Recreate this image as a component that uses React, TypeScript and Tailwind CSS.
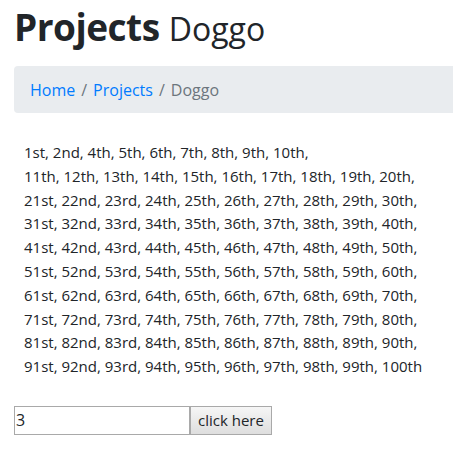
const ordinal = (n: number) => {
  const r = n % 100
  if (r >= 11 && r <= 13) return `${n}th`
  if (n % 10 === 1) return `${n}st`
  if (n % 10 === 2) return `${n}nd`
  if (n % 10 === 3) return `${n}rd`
  return `${n}th`
}

const rows = Array.from({ length: 10 }, (_, i) =>
  Array.from({ length: 10 }, (_, j) => i * 10 + j + 1).filter((n) => n !== 3)
)

export default function App() {
  return (
    <div className="bg-white text-[#212529] font-['Open_Sans',sans-serif] min-h-screen overflow-hidden">
      <h1 className="pl-[14px] pt-[3px] text-[37px] leading-[48px] font-bold tracking-[-0.5px]">
        Projects <small className="text-[32px] font-normal tracking-normal">Doggo</small>
      </h1>
      <nav className="ml-[14px] mt-[13px] h-[47px] bg-[#e9ecef] rounded-l-[4px] px-4 flex items-center text-[16px]">
        <a className="text-[#007bff]">Home</a>
        <span className="px-[6px] text-[#6c757d]">/</span>
        <a className="text-[#007bff]">Projects</a>
        <span className="px-[6px] text-[#6c757d]">/</span>
        <span className="text-[#6c757d]">Doggo</span>
      </nav>
      <div className="pl-[24px] mt-[28px] text-[15px] leading-[23.8px] whitespace-nowrap">
        {rows.map((row, i) => (
          <div key={i}>
            {row.map((n) => ordinal(n)).join(', ')}
            {i < 9 ? ',' : ''}
          </div>
        ))}
      </div>
      <div className="pl-[14px] mt-[27px] flex">
        <input
          defaultValue="3"
          className="w-[176px] h-[29px] border border-[#a9a9a9] px-[1px] text-[16px] outline-none"
        />
        <button className="h-[29px] px-[7px] border border-[#a9a9a9] bg-gradient-to-b from-[#f6f6f6] to-[#dedede] text-[15px]">
          click here
        </button>
      </div>
    </div>
  )
}
